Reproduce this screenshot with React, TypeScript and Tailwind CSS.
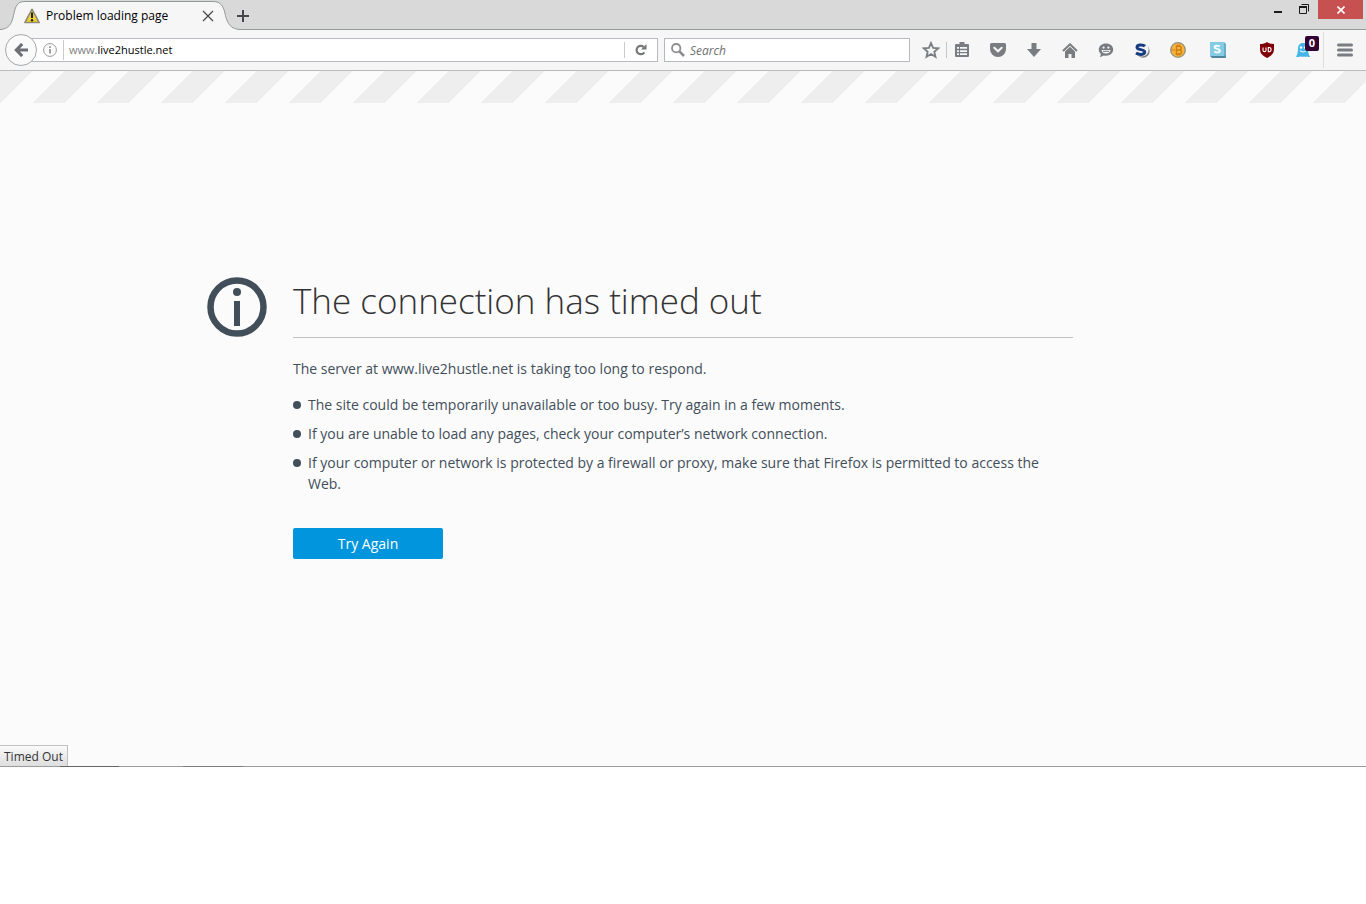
import type { ReactNode } from 'react';

const TIPS = [
    'The site could be temporarily unavailable or too busy. Try again in a few moments.',
    'If you are unable to load any pages, check your computer’s network connection.',
    'If your computer or network is protected by a firewall or proxy, make sure that Firefox is permitted to access the Web.',
];

interface ToolButtonProps {
    label: string;
    className?: string;
    children: ReactNode;
}

const ToolButton = ({ label, className = 'w-9', children }: ToolButtonProps) => (
    <button aria-label={label} className={`${className} relative flex h-8 shrink-0 items-center justify-center text-[#797c80]`}>
        {children}
    </button>
);

const WarningIcon = () => (
    <svg width="16" height="16" viewBox="0 0 16 16">
        <path d="M8 1.2 15.2 14.6H.8Z" fill="#d9b91c" stroke="#8d8a7c" strokeWidth="1.5" strokeLinejoin="round" />
        <path d="M8 3.2 13.4 13.5H2.6Z" fill="#ecd03a" />
        <path d="M8 4.500v5.500" stroke="#222" strokeWidth="2" />
        <circle cx="8" cy="12.2" r="1.2" fill="#222" />
    </svg>
);

const TabStrip = () => (
    <div className="flex h-[30px] items-stretch border-b border-[#94999a] bg-[#d9d9d9]">
        <div className="relative h-[30px] w-[240px] shrink-0">
            <svg className="absolute inset-0" width="240" height="30" viewBox="0 0 240 30">
                <path
                    d="M0 29.5C9 29 11.5 24 13.5 15.5C15.5 6 17 1.5 25 1.5H213C221 1.5 223.5 6 225.5 15.5C227.5 24 231 29 240 29.5V30H0Z"
                    fill="#f6f6f6"
                />
                <path
                    d="M0 29.5C9 29 11.5 24 13.5 15.5C15.5 6 17 1.5 25 1.5H213C221 1.5 223.5 6 225.5 15.5C227.5 24 231 29 240 29.5"
                    fill="none"
                    stroke="#94999a"
                />
            </svg>
            <div className="relative flex h-full items-center pt-0.5 pr-6 pl-6">
                <WarningIcon />
                <span className="ml-1.5 flex-1 truncate text-xs text-black">Problem loading page</span>
                <button aria-label="Close tab" className="flex h-4 w-4 items-center justify-center">
                    <svg width="12" height="12" viewBox="0 0 12 12" stroke="#4a4a4a" strokeWidth="1.3">
                        <path d="M1 1l10 10M11 1L1 11" />
                    </svg>
                </button>
            </div>
        </div>
        <button aria-label="New tab" className="flex w-1.5 items-center justify-center overflow-visible pt-0.5">
            <svg className="shrink-0" width="12" height="12" viewBox="0 0 12 12" fill="#46484b">
                <path d="M5 0h2v5h5v2H7v5H5V7H0V5h5z" />
            </svg>
        </button>
        <div className="flex flex-1 items-start justify-end pr-[3px]">
            <button aria-label="Minimize" className="flex h-[18px] w-6 items-end justify-center pb-[5px]">
                <span className="h-0.5 w-2 bg-[#1c1c1c]" />
            </button>
            <button aria-label="Restore" className="flex h-[18px] w-7 items-center justify-center">
                <svg width="10" height="10" viewBox="0 0 10 10" fill="none" stroke="#1c1c1c">
                    <path d="M.5 3v6.5h7V3M2.5 .5h7v7" />
                    <path d="M0 3h8" strokeWidth="2" />
                </svg>
            </button>
            <button aria-label="Close" className="flex h-[19px] w-[45px] items-center justify-center bg-[#c75050]">
                <svg width="8" height="8" viewBox="0 0 8 8" stroke="#fff" strokeWidth="1.6">
                    <path d="M.5 .5l7 7M7.5 .5l-7 7" />
                </svg>
            </button>
        </div>
    </div>
);

const UrlBar = () => (
    <div className="flex flex-1 items-center">
        <button
            aria-label="Back"
            className="relative z-10 flex h-8 w-8 shrink-0 items-center justify-center rounded-full border border-[#a5a8ac] bg-[#fafafa]"
        >
            <svg width="14" height="14" viewBox="0 0 14 14" fill="none" stroke="#6d7074" strokeWidth="3.2">
                <path d="M8.2 1L2.4 7l5.800 6M2.5 7H14" />
            </svg>
        </button>
        <div className="-ml-4 flex h-6 flex-1 items-center border border-[#b6babf] bg-white pl-[21px]">
            <svg className="shrink-0" width="14" height="14" viewBox="0 0 14 14">
                <circle cx="7" cy="7" r="6.4" fill="none" stroke="#97999c" />
                <path d="M6.2 6h1.600v4.500H6.200zM6.200 3.300h1.600v1.600H6.200z" fill="#88898c" />
            </svg>
            <span className="mr-[5px] ml-1.5 h-5 w-px bg-[#c9cbcd]" />
            <label className="flex flex-1 items-center pt-px text-[11px] text-[#808080]">
                www.
                <input
                    aria-label="Address"
                    defaultValue="live2hustle.net"
                    className="min-w-0 flex-1 bg-transparent text-black outline-none"
                />
            </label>
            <button aria-label="Reload" className="flex h-4 w-[33px] items-center justify-center border-l border-[#c9cbcd]">
                <svg width="12" height="12" viewBox="0 0 12 12">
                    <path d="M9.3 8.300A4.200 4.200 0 1 1 8.600 2.900" fill="none" stroke="#75777a" strokeWidth="2.2" />
                    <path d="M11.5 0v5.500H6z" fill="#75777a" />
                </svg>
            </button>
        </div>
    </div>
);

const SearchBar = () => (
    <label className="ml-1.5 flex h-6 w-[246px] shrink-0 items-center border border-[#b6babf] bg-white pl-1.5">
        <svg className="shrink-0" width="14" height="14" viewBox="0 0 14 14" fill="none" stroke="#8c8d90">
            <circle cx="5.2" cy="5.2" r="4.2" strokeWidth="1.8" />
            <path d="M8.4 8.400L13 13" strokeWidth="2.6" />
        </svg>
        <input
            aria-label="Search"
            placeholder="Search"
            className="ml-[5px] min-w-0 flex-1 pt-px text-xs italic outline-none placeholder:text-[#6f6f6f]"
        />
    </label>
);

const Toolbar = () => (
    <div className="flex h-[41px] items-center border-b border-[#b9bbbc] bg-[#f6f6f6] pl-[5px]">
        <UrlBar />
        <SearchBar />

        <ToolButton label="Bookmark this page" className="ml-2 w-[26px]">
            <svg width="18" height="18" viewBox="0 0 18 18" fill="none" stroke="currentColor" strokeWidth="1.8">
                <path d="M9 2l2.100 4.800 5.100.5-3.900 3.400 1.200 5.100L9 13.100l-4.500 2.700 1.200-5.100L1.800 7.300l5.100-.5z" />
            </svg>
        </ToolButton>
        <span className="-mr-[3px] ml-0.5 h-4 w-px bg-[#c4c6c8]" />
        <ToolButton label="Bookmarks">
            <svg width="16" height="16" viewBox="0 0 16 16" fill="currentColor">
                <path d="M5.500 0h5v2H14a1 1 0 0 1 1 1v11a1 1 0 0 1-1 1H2a1 1 0 0 1-1-1V3a1 1 0 0 1 1-1h3.500z" />
                <path d="M3 5h2v1.800H3zM6 5h7v1.800H6zM3 8.200h2V10H3zM6 8.200h7V10H6zM3 11.300h2V13H3zM6 11.300h7V13H6z" fill="#f6f6f6" />
            </svg>
        </ToolButton>
        <ToolButton label="Pocket">
            <svg width="16" height="14" viewBox="0 0 16 14">
                <path d="M1.500 0h13A1.500 1.500 0 0 1 16 1.500V6A8 8 0 0 1 0 6V1.500A1.500 1.500 0 0 1 1.500 0z" fill="currentColor" />
                <path d="M4.300 4.700L8 8.300l3.700-3.600" fill="none" stroke="#f6f6f6" strokeWidth="2" strokeLinecap="round" />
            </svg>
        </ToolButton>
        <ToolButton label="Downloads">
            <svg width="14" height="14" viewBox="0 0 14 14" fill="currentColor">
                <path d="M4.500 0h5v6H14L7 14 0 6h4.500z" />
            </svg>
        </ToolButton>
        <ToolButton label="Home">
            <svg width="16" height="15" viewBox="0 0 16 15">
                <path d="M1 8L8 1.300 15 8" fill="none" stroke="currentColor" strokeWidth="2" />
                <path d="M8 3.800l5 4.700V15H9.500v-4h-3v4H3V8.500z" fill="currentColor" />
            </svg>
        </ToolButton>
        <ToolButton label="Chat">
            <svg width="16" height="15" viewBox="0 0 16 15">
                <path d="M8 .5c4.200 0 7.200 2.600 7.200 6s-3 6.200-7.200 6.200c-.8 0-1.500-.1-2.200-.3L2 14.300l.9-3.400C1.500 9.800.8 8.300.8 6.500.8 3.100 3.800.5 8 .5z" fill="currentColor" />
                <circle cx="5.600" cy="4.600" r="1.100" fill="#f6f6f6" />
                <circle cx="10.400" cy="4.600" r="1.100" fill="#f6f6f6" />
                <path d="M3.500 7h9c-.3 2.300-2 3.600-4.500 3.600S3.800 9.300 3.500 7z" fill="#f6f6f6" />
                <path d="M5 8.300h6" stroke="currentColor" />
            </svg>
        </ToolButton>
        <ToolButton label="Stylish">
            <svg width="16" height="16" viewBox="0 0 16 16">
                <circle cx="9" cy="9" r="6.700" fill="#7d7d7d" />
                <circle cx="7.800" cy="7.500" r="6.900" fill="#f2f2f2" />
                <path d="M11 4.200C9.300 2.600 3 2.200 3 5.200c0 3.200 7.700 1.700 7.700 4.900 0 3.100-6.200 2.700-8.700 1" fill="none" stroke="#173d80" strokeWidth="3" />
            </svg>
        </ToolButton>
        <ToolButton label="Bitcoin">
            <svg width="16" height="16" viewBox="0 0 16 16" fill="none">
                <circle cx="8" cy="8" r="7.300" fill="#f5b53d" stroke="#91907f" strokeWidth="1.300" />
                <path d="M5.800 4.300h3.400c2.600 0 2.600 3.600 0 3.600H5.800M9.200 7.900c3.100 0 3.100 4.100 0 4.100H5.500M6.500 4v8M7.500 2.500V4M9.500 2.500V4M7.500 12v1.500M9.500 12v1.500" stroke="#d17d12" strokeWidth="1.500" />
                <path d="M1.500 8H5" stroke="#d17d12" />
            </svg>
        </ToolButton>
        <ToolButton label="Skype" className="ml-1 w-9">
            <svg width="16" height="16" viewBox="0 0 16 16">
                <path d="M2 2h14v14H2z" fill="#5594ad" />
                <path d="M0 0h14l2 2v12l-2-1z" fill="#6aaec6" />
                <path d="M0 0h14v14H0z" fill="#84cbe3" />
                <path d="M0 14h14l2 2H2z" fill="#4d879e" />
                <path d="M9.800 4.500C8.200 3.300 4.600 3.400 4.600 5.300c0 2 5.300 1.200 5.300 3.400 0 2-3.800 2.200-5.700.8" fill="none" stroke="#f2fbff" strokeWidth="2" />
            </svg>
        </ToolButton>
        <ToolButton label="uBlock Origin" className="ml-[13px] w-9">
            <svg width="16" height="16" viewBox="0 0 16 16" fill="none">
                <path d="M8 0c2 1.500 4 2 7 2v5c0 4.500-2.500 6.500-7 9-4.500-2.500-7-4.500-7-9V2c3 0 5-.5 7-2z" fill="#800008" />
                <path d="M4 5.500v2.700c0 1.900 3 1.900 3 0V5.500M9.300 5.500v4.200h.8c2.700 0 2.700-4.200 0-4.200z" stroke="#fff" strokeWidth="1.100" />
            </svg>
        </ToolButton>
        <ToolButton label="Ghostery">
            <svg width="14" height="16" viewBox="0 0 14 16">
                <path d="M7 1c3.500 0 5 2.500 5 5.500 0 3.500.5 6 2 8.500-1.500.3-2.200 0-3-.8-.8 1-2.200 1-3 .1-.8.9-2.200.9-3 0-1 .9-3 1.100-5 .4C1.500 12.500 2 9.500 2 6.500 2 3.500 3.500 1 7 1z" fill="#43b5e8" />
                <circle cx="5" cy="5.500" r="1.200" fill="#fff" />
                <circle cx="9" cy="5.500" r="1.200" fill="#fff" />
                <path d="M4 8.500c1.500 2 4.500 2 6 0" fill="none" stroke="#fff" strokeWidth="1.200" />
            </svg>
            <span className="absolute top-0.5 right-0.5 flex h-[15px] w-3.5 items-center justify-center rounded-xs bg-[#330033] text-[11px] font-bold text-white">
                0
            </span>
        </ToolButton>
        <span className="ml-0.5 h-9 w-px bg-[#dedfe0]" />
        <ToolButton label="Menu" className="w-[42px]">
            <svg width="16" height="14" viewBox="0 0 16 14" stroke="currentColor" strokeWidth="3" strokeLinecap="round">
                <path d="M1.500 2h13M1.500 7h13M1.500 12h13" />
            </svg>
        </ToolButton>
    </div>
);

const ErrorPage = () => (
    <main className="relative flex flex-1 flex-col justify-center border-b border-[#9b9c9d] bg-[#fbfbfb] pb-0.5">
        <div className="absolute inset-x-0 top-0 h-8 bg-[linear-gradient(135deg,#eee_25%,#fbfbfb_25%,#fbfbfb_50%,#eee_50%,#eee_75%,#fbfbfb_75%)] bg-[length:64px_64px]" />

        <div className="grid grid-cols-[1fr_minmax(0,780px)_1fr]">
            <div className="flex justify-end pr-[26px]">
                <svg width="60" height="60" viewBox="0 0 60 60" fill="#424e5a">
                    <circle cx="30" cy="30" r="26.500" fill="none" stroke="#424e5a" strokeWidth="6.500" />
                    <circle cx="30" cy="15" r="4" />
                    <path d="M27 24h6v25h-6z" />
                </svg>
            </div>
            <div className="text-sm leading-[21px] text-[#424e5a]">
                <h1 className="border-b border-[#c1c1c1] pb-3 text-[35px] leading-12 font-light text-[#333]">
                    The connection has timed out
                </h1>
                <p className="mt-5">The server at www.live2hustle.net is taking too long to respond.</p>
                <ul className="mt-[15px] flex flex-col gap-2">
                    {TIPS.map((tip) => (
                        <li key={tip} className="flex">
                            <span className="mt-[7px] mr-[7px] h-2 w-2 shrink-0 rounded-full bg-[#424e5a]" />
                            {tip}
                        </li>
                    ))}
                </ul>
                <button className="mt-[34px] h-[31px] w-[150px] rounded-xs bg-[#0095dd] text-white">Try Again</button>
            </div>
        </div>

        {/* status bubble */}
        <div className="absolute bottom-0 left-0 border-t border-r border-[#c0c0c0] bg-linear-to-b from-[#fafafa] to-[#dedede] px-1 pt-[3px] pb-px text-xs text-[#333]">
            Timed Out
        </div>

        {/* taskbar buttons peeking over the window edge */}
        <span className="absolute -bottom-px left-[60px] h-px w-[59px] bg-[#666]" />
        <span className="absolute -bottom-px left-[183px] h-px w-[60px] bg-[#7c7c7c]" />
    </main>
);

export default function App() {
    return (
        <div className="flex min-h-screen flex-col bg-white pb-[137px] font-['Open_Sans','Noto_Sans',sans-serif]">
            <TabStrip />
            <Toolbar />
            <ErrorPage />
        </div>
    );
}
